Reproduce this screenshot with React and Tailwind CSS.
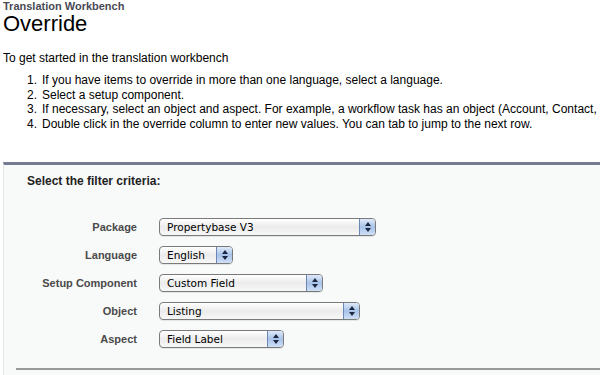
import React from "react";

const steps = [
  "If you have items to override in more than one language, select a language.",
  "Select a setup component.",
  "If necessary, select an object and aspect. For example, a workflow task has an object (Account, Contact,",
  "Double click in the override column to enter new values. You can tab to jump to the next row.",
];

const filters = [
  { label: "Package", value: "Propertybase V3", width: "w-[217px]" },
  { label: "Language", value: "English", width: "w-[74px]" },
  { label: "Setup Component", value: "Custom Field", width: "w-[164px]" },
  { label: "Object", value: "Listing", width: "w-[201px]" },
  { label: "Aspect", value: "Field Label", width: "w-[125px]" },
];

const AquaSelect = ({ value, width }) => {
  return (
    <div
      className={`${width} h-[18px] flex items-stretch rounded-[4px] border border-[#7a7a7a] bg-linear-to-b from-[#ffffff] via-[#ebebeb] to-[#f7f7f7] overflow-hidden shadow-[0_1px_0_rgba(0,0,0,0.08)]`}
    >
      <span className="flex-1 pl-[7px] text-[10.5px] leading-[16px] text-black font-['DejaVu_Sans',sans-serif] whitespace-nowrap">
        {value}
      </span>
      <span className="w-[16px] flex flex-col items-center justify-center gap-[2px] border-l border-[#6b86b3] bg-linear-to-b from-[#dfeafa] via-[#a8c2e8] to-[#cfe0f6]">
        <svg width="6" height="4" viewBox="0 0 6 4">
          <path d="M3 0 L6 4 L0 4 Z" fill="#1b2740" />
        </svg>
        <svg width="6" height="4" viewBox="0 0 6 4">
          <path d="M0 0 L6 0 L3 4 Z" fill="#1b2740" />
        </svg>
      </span>
    </div>
  );
};

export default function App() {
  return (
    <div className="w-[600px] h-[375px] overflow-hidden bg-white text-black font-['Liberation_Sans',Arial,sans-serif]">
      {/* Header */}
      <div className="pl-[3px]">
        <div className="text-[11px] leading-[13px] font-bold text-[#4a4a56]">Translation Workbench</div>
        <h1 className="text-[22px] leading-[22px] text-black">Override</h1>
      </div>

      <p className="mt-[16px] pl-[3px] text-[12px] leading-[14px]">To get started in the translation workbench</p>

      <ol className="mt-[8px] text-[12px] leading-[14.5px]">
        {steps.map((s, i) => (
          <li key={i} className="flex whitespace-nowrap">
            <span className="w-[42px] text-right pr-[5px] shrink-0">{i + 1}.</span>
            <span>{s}</span>
          </li>
        ))}
      </ol>

      {/* Filter panel */}
      <div className="mt-[31px] ml-[3px] w-[640px] h-[300px] border-t-[3px] border-t-[#767b93] border-l border-l-[#e2e4e6] bg-[#f8f9f9]">
        <div className="pt-[9px] pl-[23px] text-[12px] leading-[14px] font-bold text-[#222]">
          Select the filter criteria:
        </div>

        <div className="mt-[30px] flex flex-col gap-[10px]">
          {filters.map((f) => (
            <div key={f.label} className="flex items-center">
              <span className="w-[133px] text-right text-[11px] font-bold text-[#4a4a4a]">{f.label}</span>
              <span className="ml-[22px]">
                <AquaSelect value={f.value} width={f.width} />
              </span>
            </div>
          ))}
        </div>

        <div className="mt-[20px] ml-[12px] h-[2px] bg-[#9a9a9a]" />
      </div>
    </div>
  );
}
